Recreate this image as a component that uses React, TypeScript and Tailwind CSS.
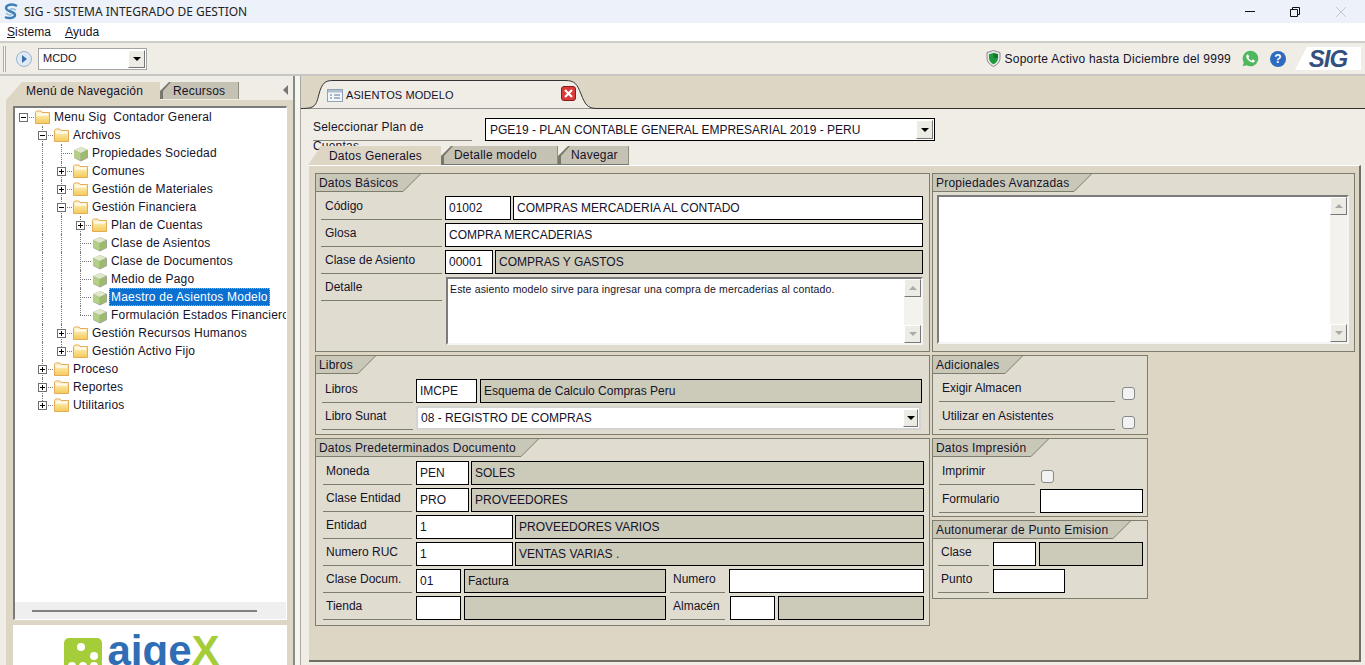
import type { ReactNode } from 'react';

const LINE = 'border-[#7d7d6e]';

interface TreeNode {
  label: string;
  level: number;
  kind: 'open' | 'closed' | 'leaf';
  stems: number[];
  halfStem?: number;
  selected?: boolean;
}

const TREE: TreeNode[] = [
  { label: 'Menu Sig  Contador General', level: 0, kind: 'open', stems: [] },
  { label: 'Archivos', level: 1, kind: 'open', stems: [27] },
  { label: 'Propiedades Sociedad', level: 2, kind: 'leaf', stems: [27, 46] },
  { label: 'Comunes', level: 2, kind: 'closed', stems: [27, 46] },
  { label: 'Gestión de Materiales', level: 2, kind: 'closed', stems: [27, 46] },
  { label: 'Gestión Financiera', level: 2, kind: 'open', stems: [27, 46] },
  { label: 'Plan de Cuentas', level: 3, kind: 'closed', stems: [27, 46, 65] },
  { label: 'Clase de Asientos', level: 3, kind: 'leaf', stems: [27, 46, 65] },
  { label: 'Clase de Documentos', level: 3, kind: 'leaf', stems: [27, 46, 65] },
  { label: 'Medio de Pago', level: 3, kind: 'leaf', stems: [27, 46, 65] },
  { label: 'Maestro de Asientos Modelo', level: 3, kind: 'leaf', stems: [27, 46, 65], selected: true },
  { label: 'Formulación Estados Financieros', level: 3, kind: 'leaf', stems: [27, 46], halfStem: 65 },
  { label: 'Gestión Recursos Humanos', level: 2, kind: 'closed', stems: [27, 46] },
  { label: 'Gestión Activo Fijo', level: 2, kind: 'closed', stems: [27], halfStem: 46 },
  { label: 'Proceso', level: 1, kind: 'closed', stems: [27] },
  { label: 'Reportes', level: 1, kind: 'closed', stems: [27] },
  { label: 'Utilitarios', level: 1, kind: 'closed', stems: [], halfStem: 27 },
];

function FolderIcon() {
  return (
    <svg width="15" height="14" viewBox="0 0 15 14" className="block">
      <defs>
        <linearGradient id="folderFill" x1="0" y1="0" x2="0" y2="1">
          <stop offset="0" stopColor="#fff7d2" />
          <stop offset="1" stopColor="#f5ca55" />
        </linearGradient>
      </defs>
      <path d="M0.5 2.5 L1.5 1 H6 L7 2.5 H14.5 V13.5 H0.5 Z" fill="url(#folderFill)" stroke="#e3ab5a" />
      <path d="M2 5 H13 M2 4 H13" stroke="#ffffff" />
    </svg>
  );
}

function CubeIcon() {
  return (
    <svg width="16" height="16" viewBox="0 0 16 16" className="block">
      <path d="M8 1 L15 4 V12 L8 15.5 L1 12 V4 Z" fill="#a4a89c" />
      <path d="M7.5 1 L14 4 L7.5 7 L1 4 Z" fill="#dfe9c9" />
      <path d="M1 4.3 L7.5 7.3 V14.5 L1 11.5 Z" fill="#b4cf86" />
      <path d="M7.8 7.3 L14 4.3 V11.5 L7.8 14.5 Z" fill="#9dbb6c" />
    </svg>
  );
}

function Expander({ open }: { open: boolean }) {
  return (
    <span className="absolute top-[5px] flex h-[9px] w-[9px] items-center justify-center border border-[#6f6f6f] bg-white left-[-4px]">
      <span className="absolute h-px w-[5px] bg-black" />
      {!open && <span className="absolute h-[5px] w-px bg-black" />}
    </span>
  );
}

function TreeRow({ node }: { node: TreeNode }) {
  const stemX = 8 + 19 * node.level;
  const iconX = 20 + 19 * node.level;
  const textX = 40 + 19 * node.level - 3;
  return (
    <div className="relative h-[18px] whitespace-pre">
      {node.stems.map((x) => (
        <span key={x} className="absolute top-0 h-full border-l border-dotted border-[#777]" style={{ left: x }} />
      ))}
      {node.halfStem !== undefined && (
        <span className="absolute top-0 h-[9px] border-l border-dotted border-[#777]" style={{ left: node.halfStem }} />
      )}
      <span className="absolute top-[9px] w-[11px] border-t border-dotted border-[#777]" style={{ left: stemX }} />
      {node.kind !== 'leaf' && (
        <span className="absolute top-0 h-full" style={{ left: stemX }}>
          <Expander open={node.kind === 'open'} />
        </span>
      )}
      <span className="absolute top-[2px]" style={{ left: iconX }}>
        {node.kind === 'leaf' ? <CubeIcon /> : <FolderIcon />}
      </span>
      <span
        className={
          node.selected
            ? 'absolute top-0 flex h-[18px] items-center border border-dotted border-[#f0a040] bg-[#0a70d2] pl-[1px] pr-[1px] tracking-[0.2px] text-white'
            : 'absolute top-0 flex h-[18px] items-center pl-[2px] tracking-[0.2px]'
        }
        style={{ left: textX }}
      >
        {node.label}
      </span>
    </div>
  );
}

function ArrowButton({ className }: { className: string }) {
  return (
    <span
      className={`flex shrink-0 items-center justify-center border border-t-white border-l-white border-r-[#777] border-b-[#777] bg-[#ecebe4] ${className}`}
    >
      <span className="h-0 w-0 border-x-[4px] border-t-[4px] border-x-transparent border-t-black" />
    </span>
  );
}

function ScrollBar() {
  return (
    <div className="flex h-full w-[17px] shrink-0 flex-col justify-between bg-[#f3f2ee]">
      <span className="flex h-[18px] items-center justify-center border border-t-white border-l-white border-r-[#777] border-b-[#777] bg-[#ecebe4]">
        <span className="h-0 w-0 border-x-[4px] border-b-[4px] border-x-transparent border-b-[#aaa]" />
      </span>
      <span className="flex h-[18px] items-center justify-center border border-t-white border-l-white border-r-[#777] border-b-[#777] bg-[#ecebe4]">
        <span className="h-0 w-0 border-x-[4px] border-t-[4px] border-x-transparent border-t-[#aaa]" />
      </span>
    </div>
  );
}

function Group({ title, className, children }: { title: string; className: string; children: ReactNode }) {
  return (
    <section className={`border ${LINE} bg-[#e0ddd0] ${className}`}>
      <div className="flex h-[18px]">
        <div className={`flex items-center border-b ${LINE} bg-[#c9c8b8] pl-[3px] pr-[5px] tracking-[0.2px] whitespace-nowrap`}>
          {title}
        </div>
        <svg width="18" height="18" viewBox="0 0 18 18" className="block shrink-0">
          <path d="M0 0 H17.5 L0 17.5 Z" fill="#c9c8b8" />
          <path d="M17.5 0 L0 17.5" stroke="#7d7d6e" fill="none" />
        </svg>
      </div>
      {children}
    </section>
  );
}

function Label({ className, children }: { className: string; children: ReactNode }) {
  return (
    <div className={`h-[24px] shrink-0 border-b ${LINE} leading-[21px] ${className}`}>{children}</div>
  );
}

function Box({ className, children, gray }: { className: string; children?: ReactNode; gray?: boolean }) {
  return (
    <div
      className={`flex h-[24px] shrink-0 items-center border border-black pl-[3px] pb-[1px] whitespace-nowrap ${
        gray ? 'bg-[#cccbb9]' : 'bg-white'
      } ${className}`}
    >
      {children}
    </div>
  );
}

function Check({ className }: { className: string }) {
  return <span className={`block h-[13px] w-[13px] rounded-[3px] border border-[#888] bg-[#f2f2f2] ${className}`} />;
}

function SubTab({ label, className, active }: { label: string; className: string; active?: boolean }) {
  if (active) {
    return (
      <div
        className={`flex h-[19px] items-center bg-[#ddd6c5] [clip-path:polygon(13px_0,100%_0,100%_100%,0_100%)] ${className}`}
      >
        {label}
      </div>
    );
  }
  return (
    <div
      className={`h-[19px] bg-[#77776c] [clip-path:polygon(10px_0,100%_0,100%_100%,0_100%,0_10px)] ${className}`}
    >
      <div className="ml-[3px] flex h-[18px] items-center border-r border-[#8f8d80] bg-[#c5c2b3] pl-[10px] [clip-path:polygon(9px_0,100%_0,100%_100%,0_100%,0_10px)]">
        {label}
      </div>
    </div>
  );
}

function TopBars() {
  return (
    <>
      <div className="flex h-[23px] shrink-0 items-center bg-[#edf2fa]">
        <svg width="16" height="18" viewBox="0 0 16 18" className="ml-[3px] block">
          <path d="M14 3 C9 0 3 2 3 5 C3 9 12 8 12 12 C12 15 6 16 2 14" fill="none" stroke="#3c7fb8" strokeWidth="2.4" />
          <path d="M13 7 C9 5 7 6 7 7 M3 10 C6 13 9 12 9 11" fill="none" stroke="#9ac0de" strokeWidth="1.6" />
        </svg>
        <span className="ml-[5px] font-['Noto_Sans',sans-serif] text-[12px] text-[#222]">SIG - SISTEMA INTEGRADO DE GESTION</span>
        <div className="ml-auto flex items-center">
          <svg width="12" height="12" viewBox="0 0 12 12" className="mr-[33px] block">
            <path d="M1 5.5 H11" stroke="#111" />
          </svg>
          <svg width="12" height="12" viewBox="0 0 12 12" className="mr-[34px] block">
            <path d="M1.5 3.5 H8.5 V10.5 H1.5 Z M3.5 3.5 V1.5 H10.5 V8.5 H8.5" fill="none" stroke="#111" />
          </svg>
          <svg width="12" height="12" viewBox="0 0 12 12" className="mr-[18px] block">
            <path d="M1 1 L11 11 M11 1 L1 11" stroke="#c4c6ca" />
          </svg>
        </div>
      </div>
      <div className="flex h-[18px] shrink-0 items-center gap-[14px] bg-white pl-[7px] tracking-[0.1px]">
        <span>
          <span className="underline">S</span>istema
        </span>
        <span>
          <span className="underline">A</span>yuda
        </span>
      </div>
      <div className="flex h-[35px] shrink-0 items-center border-y-2 border-t-[#cfcdc8] border-b-[#c6c6c2] bg-[#efede6]">
        <span className="ml-[3px] h-[26px] w-[3px] border-x border-x-[#aaa] bg-[#f7f7f7]" />
        <span className="ml-[10px] flex h-[16px] w-[16px] items-center justify-center rounded-full border border-[#9db4cf] bg-[#dfe9f5]">
          <span className="ml-[1px] h-0 w-0 border-y-[4px] border-l-[5px] border-y-transparent border-l-[#3a6ea8]" />
        </span>
        <div className="ml-[6px] flex h-[22px] w-[109px] items-center justify-between border border-[#a5a5a5] bg-white pl-[4px] pr-[1px] text-[11px]">
          MCDO
          <ArrowButton className="h-[18px] w-[17px]" />
        </div>
        <div className="ml-auto flex items-center">
          <svg width="15" height="17" viewBox="0 0 15 17" className="block">
            <path d="M7.5 0.5 L14 2.5 V8 C14 12 11 15 7.5 16.5 C4 15 1 12 1 8 V2.5 Z" fill="#e6e6e6" stroke="#8a8a8a" />
            <path d="M7.5 3 L12 4.3 V8 C12 11 10 13 7.5 14.2 C5 13 3 11 3 8 V4.3 Z" fill="#1e9a3c" />
            <path d="M7.5 3 L12 4.3 V8 H7.5 Z" fill="#0f7a2b" />
          </svg>
          <span className="ml-[3px] tracking-[0.25px]">Soporte Activo hasta Diciembre del 9999</span>
          <svg width="17" height="17" viewBox="0 0 24 24" className="ml-[11px] block">
            <path d="M12 1 A11 11 0 1 1 6.4 21.5 L1 23 L2.5 17.6 A11 11 0 0 1 12 1 Z" fill="#4fb85c" />
            <path
              d="M17.472 14.382c-.297-.149-1.758-.867-2.03-.967-.273-.099-.471-.148-.67.15-.197.297-.767.966-.94 1.164-.173.199-.347.223-.644.075-.297-.15-1.255-.463-2.39-1.475-.883-.788-1.48-1.761-1.653-2.059-.173-.297-.018-.458.13-.606.134-.133.298-.347.446-.52.149-.174.198-.298.298-.497.099-.198.05-.371-.025-.52-.075-.149-.669-1.612-.916-2.207-.242-.579-.487-.5-.669-.51-.173-.008-.371-.01-.57-.01-.198 0-.52.074-.792.372-.272.297-1.04 1.016-1.04 2.479 0 1.462 1.065 2.875 1.213 3.074.149.198 2.096 3.2 5.077 4.487.709.306 1.262.489 1.694.625.712.227 1.36.195 1.871.118.571-.085 1.758-.719 2.006-1.413.248-.694.248-1.289.173-1.413-.074-.124-.272-.198-.57-.347z"
              fill="#fff"
            />
          </svg>
          <span className="ml-[11px] flex h-[16px] w-[16px] items-center justify-center rounded-full bg-[#2d6bc0] text-[12px] font-bold text-white">
            ?
          </span>
          <div className="relative ml-[9px] mr-[4px] flex h-[23px] w-[66px] items-center justify-center bg-white [clip-path:polygon(12px_0,100%_0,100%_100%,0_100%)]">
            <span className="text-[24px] leading-none font-bold tracking-[-1px] text-[#34507f] italic">SIG</span>
          </div>
        </div>
      </div>
    </>
  );
}

function LeftPanel() {
  return (
    <div className="flex w-[293px] shrink-0 flex-col">
      <div className="flex h-[24px] shrink-0 items-end pl-[6px]">
        <div className="flex h-[18px] w-[154px] items-center bg-[#ddd6c5] pl-[20px] tracking-[0.2px] [clip-path:polygon(16px_0,100%_0,100%_100%,0_100%)]">
          Menú de Navegación
        </div>
        <div className="mb-[1px] h-[17px] w-[79px] bg-[#77776c] [clip-path:polygon(9px_0,100%_0,100%_100%,0_100%,0_9px)]">
          <div className="ml-[3px] flex h-[17px] items-center border-r border-[#8f8d80] bg-[#c5c2b3] pl-[10px] tracking-[0.2px] [clip-path:polygon(8px_0,100%_0,100%_100%,0_100%,0_9px)]">
            Recursos
          </div>
        </div>
        <span className="mb-[5px] ml-[44px] h-0 w-0 border-y-[5px] border-r-[5px] border-y-transparent border-r-[#777]" />
      </div>
      <div className="ml-[6px] flex min-h-0 flex-1 flex-col bg-[#ddd6c5] pt-[6px] pl-[7px] pr-[6px]">
        <div className="flex h-[514px] shrink-0 flex-col overflow-hidden border-t-2 border-l-2 border-r border-b border-t-[#7b7b7b] border-l-[#7b7b7b] border-r-white border-b-white bg-white">
          <div className="min-h-0 flex-1 overflow-hidden">
            {TREE.map((node) => (
              <TreeRow key={node.label} node={node} />
            ))}
          </div>
          <div className="flex h-[17px] shrink-0 items-center bg-[#efefef] pl-[17px]">
            <span className="h-[2px] w-[225px] bg-[#808080]" />
          </div>
        </div>
        <div className="mt-[5px] flex min-h-0 flex-1 items-start justify-center gap-[5px] overflow-hidden bg-white pt-[13px] pr-[16px] pl-[0px]">
          <div className="relative h-[40px] w-[38px] shrink-0 rounded-[5px] bg-[#a5cd39]">
            <span className="absolute top-[5px] left-[13px] h-[8px] w-[8px] rounded-full bg-white" />
            <span className="absolute top-[14px] left-[26px] h-[8px] w-[8px] rounded-full bg-white" />
            <span className="absolute top-[24px] left-[4px] h-[8px] w-[8px] rounded-full bg-white" />
            <span className="absolute top-[24px] left-[15px] h-[8px] w-[8px] rounded-full bg-white" />
            <span className="absolute top-[24px] left-[26px] h-[8px] w-[8px] rounded-full bg-white" />
          </div>
          <span className="-mt-[8px] text-[42px] leading-none font-bold text-[#2f6db5]">
            aige<span className="text-[#a5cd39]">X</span>
          </span>
        </div>
      </div>
    </div>
  );
}

function TabStrip() {
  return (
    <div className="relative flex h-[33px] shrink-0 bg-[#ddd6c5]">
      <svg width="1064" height="33" viewBox="0 0 1064 33" className="absolute top-0 left-0 block">
        <path
          d="M0 32.5 C14 32.5 15 30 18 18 C21 7 24 4.5 32 4.5 H264 C274 4.5 276 8 280 18 C284 28 286 32.5 296 32.5 H1064 V33 H0 Z"
          fill="#efede6"
          stroke="#333"
        />
      </svg>
      <div className="relative ml-[26px] flex h-[28px] w-[250px] items-center self-end">
        <svg width="16" height="13" viewBox="0 0 16 13" className="block shrink-0">
          <rect x="0.5" y="0.5" width="15" height="12" fill="#f3f6fa" stroke="#8ea3b8" />
          <rect x="1" y="1" width="14" height="2.5" fill="#aebfd0" />
          <path d="M3 6 H5 M7 6 H13 M3 9 H5 M7 9 H13" stroke="#8ea3b8" strokeWidth="1.4" />
        </svg>
        <span className="ml-[3px] text-[11px] tracking-[0.1px]">ASIENTOS MODELO</span>
        <span className="absolute top-[5px] left-[234px] flex h-[15px] w-[15px] items-center justify-center rounded-[3px] border border-[#8c1c1c] bg-[#d93a3a]">
          <svg width="9" height="9" viewBox="0 0 9 9" className="block">
            <path d="M1 1 L8 8 M8 1 L1 8" stroke="#fff" strokeWidth="2.2" />
          </svg>
        </span>
      </div>
    </div>
  );
}

function DatosBasicos() {
  return (
    <Group title="Datos Básicos" className="h-[179px]">
      <div className="flex flex-col gap-[3px] pt-[4px] pl-[5px]">
        <div className="flex">
          <Label className="w-[121px] pl-[4px]">Código</Label>
          <Box className="ml-[3px] w-[66px]">01002</Box>
          <Box className="ml-[2px] w-[410px]">COMPRAS MERCADERIA AL CONTADO</Box>
        </div>
        <div className="flex">
          <Label className="w-[121px] pl-[4px]">Glosa</Label>
          <Box className="ml-[3px] w-[478px]">COMPRA MERCADERIAS</Box>
        </div>
        <div className="flex">
          <Label className="w-[121px] pl-[4px]">Clase de Asiento</Label>
          <Box className="ml-[3px] w-[48px]">00001</Box>
          <Box gray className="ml-[2px] w-[428px]">COMPRAS Y GASTOS</Box>
        </div>
        <div className="flex">
          <Label className="w-[121px] pl-[4px]">Detalle</Label>
          <div className="ml-[4px] flex h-[68px] w-[477px] border-t-2 border-l-2 border-r-2 border-b-2 border-t-[#7b7b7b] border-l-[#7b7b7b] border-r-[#f5f5f5] border-b-[#f5f5f5] bg-white">
            <p className="min-w-0 flex-1 pt-[3px] pl-[2px] text-[10.5px] tracking-[0.15px]">
              Este asiento modelo sirve para ingresar una compra de mercaderias al contado.
            </p>
            <ScrollBar />
          </div>
        </div>
      </div>
    </Group>
  );
}

function Libros() {
  return (
    <Group title="Libros" className="mt-[3px] h-[80px]">
      <div className="flex flex-col gap-[3px] pt-[5px] pl-[6px]">
        <div className="flex">
          <Label className="w-[91px] pl-[3px]">Libros</Label>
          <Box className="ml-[3px] w-[61px]">IMCPE</Box>
          <Box gray className="ml-[3px] w-[442px]">Esquema de Calculo Compras Peru</Box>
        </div>
        <div className="flex">
          <Label className="w-[91px] pl-[3px]">Libro Sunat</Label>
          <div className="ml-[3px] flex h-[24px] w-[505px] items-center justify-between border-2 border-[#d3d3cf] bg-white pl-[3px] pr-[1px]">
            08 - REGISTRO DE COMPRAS
            <ArrowButton className="h-[18px] w-[15px]" />
          </div>
        </div>
      </div>
    </Group>
  );
}

function DatosDocumento() {
  return (
    <Group title="Datos Predeterminados Documento" className="mt-[3px] h-[188px]">
      <div className="flex flex-col gap-[3px] pt-[4px] pl-[7px]">
        <div className="flex">
          <Label className="w-[89px] pl-[3px]">Moneda</Label>
          <Box className="ml-[4px] w-[53px]">PEN</Box>
          <Box gray className="ml-[2px] w-[453px]">SOLES</Box>
        </div>
        <div className="flex">
          <Label className="w-[89px] pl-[3px]">Clase Entidad</Label>
          <Box className="ml-[4px] w-[53px]">PRO</Box>
          <Box gray className="ml-[2px] w-[453px]">PROVEEDORES</Box>
        </div>
        <div className="flex">
          <Label className="w-[89px] pl-[3px]">Entidad</Label>
          <Box className="ml-[4px] w-[97px]">1</Box>
          <Box gray className="ml-[2px] w-[409px]">PROVEEDORES VARIOS</Box>
        </div>
        <div className="flex">
          <Label className="w-[89px] pl-[3px]">Numero RUC</Label>
          <Box className="ml-[4px] w-[97px]">1</Box>
          <Box gray className="ml-[2px] w-[409px]">VENTAS VARIAS .</Box>
        </div>
        <div className="flex">
          <Label className="w-[89px] pl-[3px]">Clase Docum.</Label>
          <Box className="ml-[4px] w-[45px]">01</Box>
          <Box gray className="ml-[3px] w-[202px]">Factura</Box>
          <Label className="ml-[4px] w-[55px] pl-[3px]">Numero</Label>
          <Box className="ml-[4px] w-[195px]" />
        </div>
        <div className="flex">
          <Label className="w-[89px] pl-[3px]">Tienda</Label>
          <Box className="ml-[4px] w-[45px]" />
          <Box gray className="ml-[3px] w-[202px]" />
          <Label className="ml-[4px] w-[55px] pl-[3px]">Almacén</Label>
          <Box className="ml-[5px] w-[45px]" />
          <Box gray className="ml-[3px] w-[146px]" />
        </div>
      </div>
    </Group>
  );
}

function RightColumn() {
  return (
    <div className="ml-[3px] flex w-[216px] flex-col">
      <Group title="Adicionales" className="h-[80px]">
        <div className="flex flex-col gap-[4px] pt-[4px] pl-[6px]">
          <div className="flex items-end">
            <Label className="w-[176px] pl-[3px]">Exigir Almacen</Label>
            <Check className="mb-[2px] ml-[7px]" />
          </div>
          <div className="flex items-end">
            <Label className="w-[176px] pl-[3px]">Utilizar en Asistentes</Label>
            <Check className="mb-[1px] ml-[7px]" />
          </div>
        </div>
      </Group>
      <Group title="Datos Impresión" className="mt-[3px] h-[79px]">
        <div className="flex flex-col gap-[4px] pt-[4px] pl-[6px]">
          <div className="flex items-end">
            <Label className="w-[96px] pl-[3px]">Imprimir</Label>
            <Check className="mb-[2px] ml-[6px]" />
          </div>
          <div className="flex">
            <Label className="w-[96px] pl-[3px]">Formulario</Label>
            <Box className="ml-[5px] w-[103px]" />
          </div>
        </div>
      </Group>
      <Group title="Autonumerar de Punto Emision" className="mt-[3px] h-[79px]">
        <div className="flex flex-col gap-[3px] pt-[3px] pl-[5px]">
          <div className="flex">
            <Label className="w-[51px] pl-[3px]">Clase</Label>
            <Box className="ml-[4px] w-[43px]" />
            <Box gray className="ml-[3px] w-[104px]" />
          </div>
          <div className="flex">
            <Label className="w-[51px] pl-[3px]">Punto</Label>
            <Box className="ml-[4px] w-[72px]" />
          </div>
        </div>
      </Group>
    </div>
  );
}

function RightPanel() {
  return (
    <div className="flex min-w-0 flex-1 flex-col">
      <TabStrip />
      <div className="flex min-h-0 flex-1 flex-col bg-[#efede6]">
        <div className="flex h-[23px] shrink-0 items-stretch pl-[12px] mt-[9px]">
          <div className="w-[159px] border-b border-[#8a8a7c] tracking-[0.2px] leading-[19px]">Seleccionar Plan de Cuentas</div>
          <div className="ml-[13px] flex w-[450px] items-center justify-between border border-black bg-white pl-[4px] pr-[1px]">
            PGE19 - PLAN CONTABLE GENERAL EMPRESARIAL 2019 - PERU
            <ArrowButton className="h-[19px] w-[17px]" />
          </div>
        </div>
        <div className="mt-[5px] flex h-[19px] shrink-0 pl-[7px]">
          <SubTab active label="Datos Generales" className="w-[133px] pl-[21px] tracking-[0.2px]" />
          <SubTab label="Detalle modelo" className="w-[117px] tracking-[0.2px]" />
          <SubTab label="Navegar" className="w-[71px] tracking-[0.2px]" />
        </div>
        <div className="ml-[8px] h-[497px] w-[1052px] shrink-0 border-t border-r-2 border-b-2 border-t-white border-r-[#6f6f64] border-b-[#6f6f64] bg-[#ddd6c5] pt-[7px] pl-[6px]">
          <div className="flex">
            <div className="flex w-[615px] flex-col">
              <DatosBasicos />
              <Libros />
              <DatosDocumento />
            </div>
            <div className="flex flex-col">
              <Group title="Propiedades Avanzadas" className="ml-[2px] h-[179px] w-[423px]">
                <div className="mt-[3px] ml-[4px] flex h-[149px] w-[412px] border-t-2 border-l-2 border-r-2 border-b-2 border-t-[#7b7b7b] border-l-[#7b7b7b] border-r-[#f5f5f5] border-b-[#f5f5f5] bg-white">
                  <div className="flex-1" />
                  <ScrollBar />
                </div>
              </Group>
              <div className="-ml-[1px] mt-[3px]">
                <RightColumn />
              </div>
            </div>
          </div>
        </div>
      </div>
    </div>
  );
}

export default function App() {
  return (
    <div className="flex h-[665px] w-[1365px] flex-col overflow-hidden bg-[#efede6] font-['Liberation_Sans',Arial,sans-serif] text-[12px] text-[#15122a]">
      <TopBars />
      <div className="flex min-h-0 flex-1">
        <LeftPanel />
        <div className="ml-[0px] h-full w-[8px] shrink-0 border-l-2 border-r border-l-[#8a8a84] border-r-[#a8a8a2] bg-[#f6f5f0]" />
        <RightPanel />
      </div>
    </div>
  );
}
